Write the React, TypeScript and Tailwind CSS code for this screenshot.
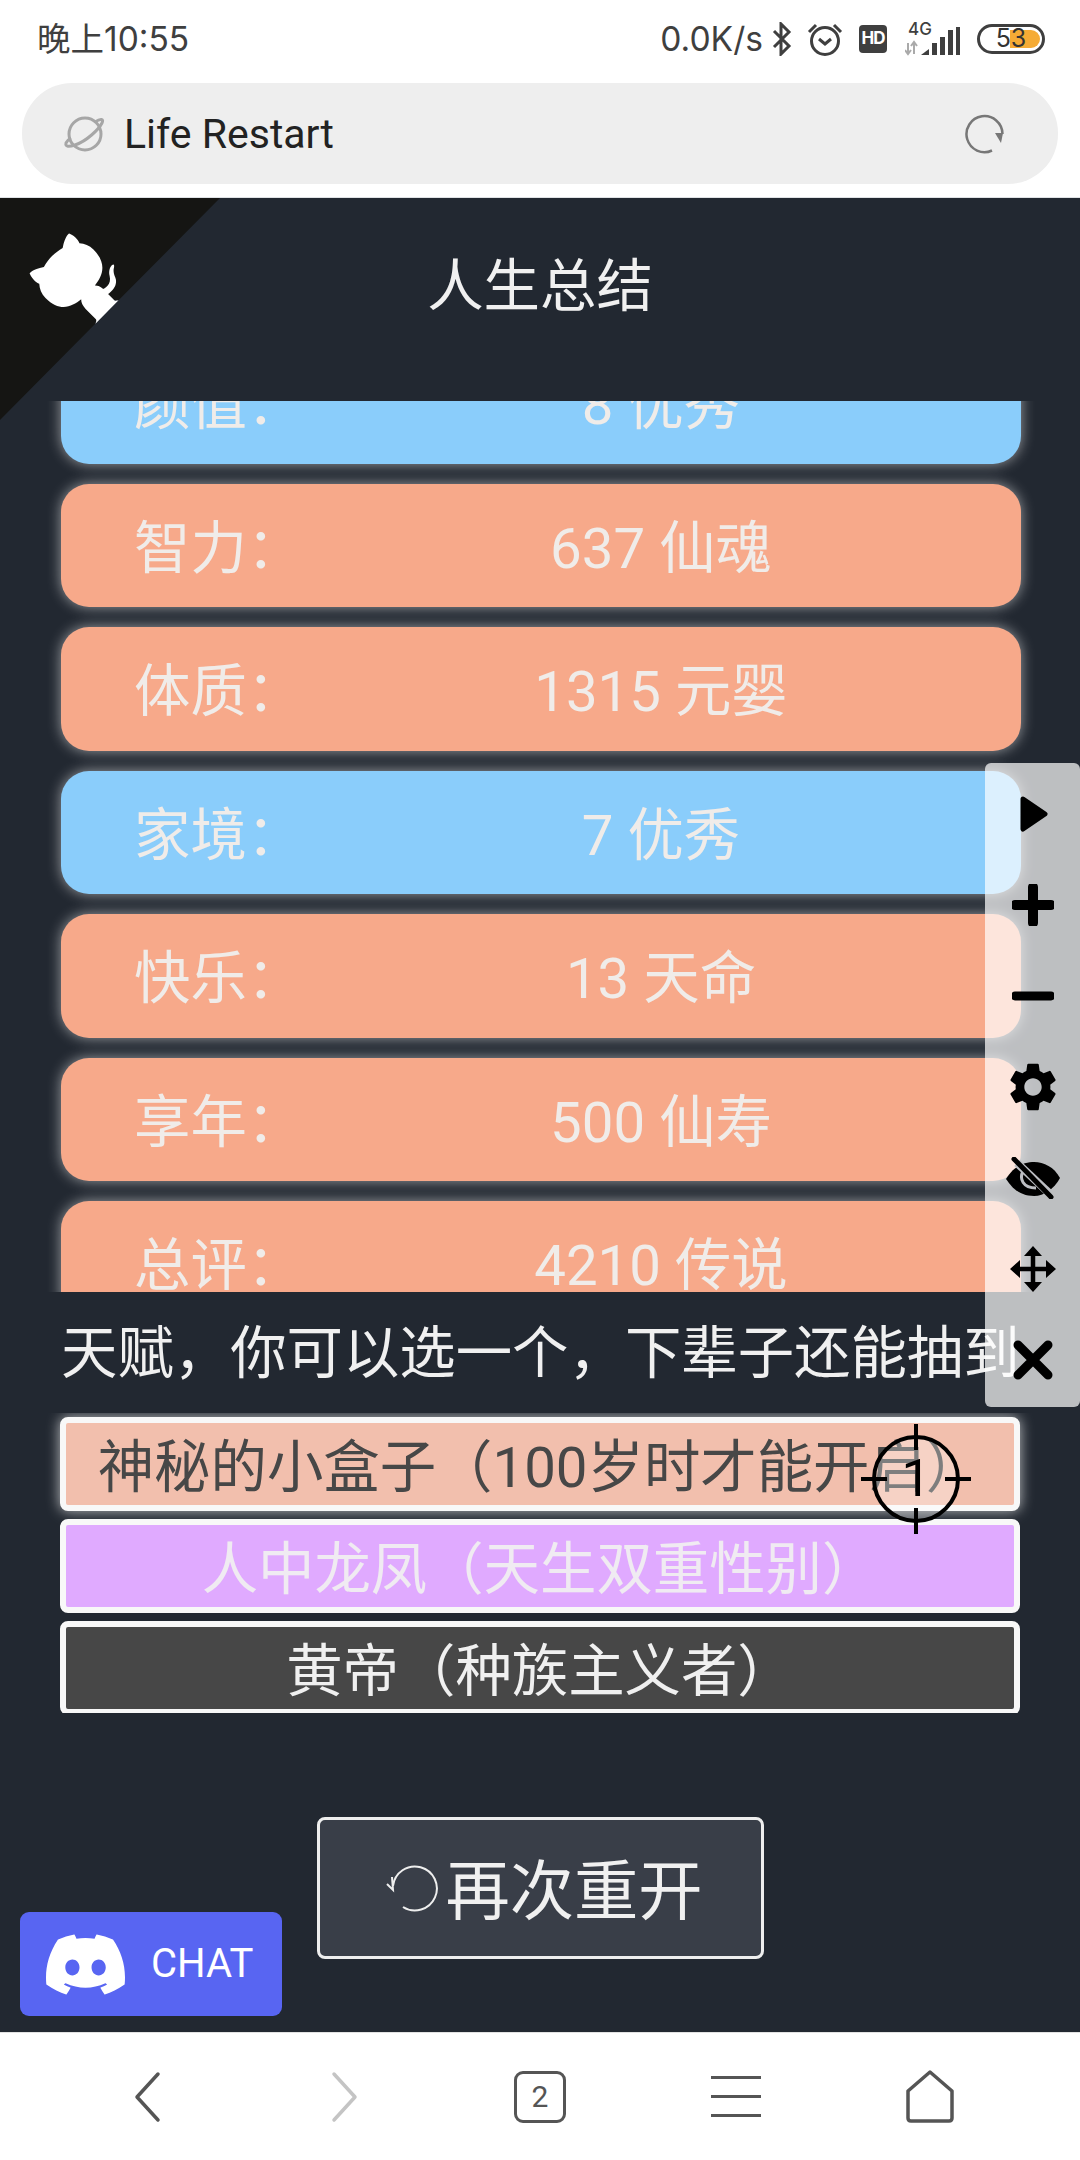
import React from 'react';
import { MdSettings } from 'react-icons/md';
import { SiDiscord } from 'react-icons/si';

const stats = [
  { k: '颜值：', v: '8 优秀', c: 'bg-[#8acdfb]' },
  { k: '智力：', v: '637 仙魂', c: 'bg-[#f7a98a]' },
  { k: '体质：', v: '1315 元婴', c: 'bg-[#f7a98a]' },
  { k: '家境：', v: '7 优秀', c: 'bg-[#8acdfb]' },
  { k: '快乐：', v: '13 天命', c: 'bg-[#f7a98a]' },
  { k: '享年：', v: '500 仙寿', c: 'bg-[#f7a98a]' },
  { k: '总评：', v: '4210 传说', c: 'bg-[#f7a98a]' },
];

function StatusBar() {
  return (
    <div className="h-[83px] shrink-0 flex items-center justify-between pl-[37px] pr-[35px] pb-[6px] text-[#3f3f3f] font-['Inter','Noto_Sans_CJK_SC',sans-serif]">
      <span className="text-[33.5px] leading-[70px]">晚上10:55</span>
      <div className="flex items-center h-[70px]">
        <span className="text-[33.6px] leading-none">0.0K/s</span>
        <svg width="20" height="34" viewBox="0 0 20 34" className="ml-[9px]" fill="none" stroke="#3f3f3f" strokeWidth="3">
          <path d="M2 9 L17 24 L9 32 V2 L17 10 L2 25" />
        </svg>
        <svg width="36" height="34" viewBox="0 0 36 34" className="ml-[15px]" fill="none" stroke="#3f3f3f" strokeWidth="3">
          <circle cx="18" cy="19" r="13.5" />
          <path d="M12 17 L18 22 L24 17" />
          <path d="M2 10 L9 3 M34 10 L27 3" />
        </svg>
        <div className="ml-[16px] w-[28px] h-[28px] rounded-[4px] bg-[#3f3f3f] text-white text-[17px] font-bold flex items-center justify-center leading-none tracking-[-1px]">HD</div>
        <div className="relative ml-[18px] w-[56px] h-[34px]">
          <span className="absolute left-[3px] top-0 text-[17px] leading-[14px] font-medium">4G</span>
          <svg width="56" height="34" viewBox="0 0 56 34" className="absolute left-0 top-0">
            <path d="M3 32 V21 M0 28 L3 32 L6 28 M9 20 V32 M6 24 L9 20 L12 24" stroke="#aaaaaa" strokeWidth="2" fill="none" />
            <path d="M16 33 L24 27 V33 Z" fill="#3f3f3f" />
            <rect x="27" y="21" width="5" height="12" fill="#3f3f3f" />
            <rect x="35" y="15" width="5" height="18" fill="#3f3f3f" />
            <rect x="43" y="8" width="5" height="25" fill="#3f3f3f" />
            <rect x="51" y="5" width="4" height="28" fill="#3f3f3f" />
          </svg>
        </div>
        <div className="relative ml-[16px] w-[68px] h-[30px] rounded-full border-[3px] border-[#3f3f3f]">
          <div className="absolute left-[30px] top-[3px] w-[30px] h-[18px] rounded-r-full bg-[#f5ab35]" />
          <span className="absolute inset-0 flex items-center justify-center text-[25px] leading-none text-[#333333]">53</span>
        </div>
      </div>
    </div>
  );
}

function AddressBar() {
  return (
    <div className="h-[115px] shrink-0 border-b border-[#dfe2e5]">
      <div className="mx-[22px] h-[101px] rounded-[50px] bg-[#eeeeee] flex items-center justify-between pl-[41px] pr-[53px]">
        <div className="flex items-center">
          <svg width="44" height="40" viewBox="0 0 44 40" fill="none" stroke="#a6a6a6" strokeWidth="3">
            <circle cx="22" cy="20" r="16" />
            <path d="M32 8 C38 4 41 5 39 9 C36 15 24 27 12 31 C6 33 2 33 3 29 C4 27 6 25 8 24" />
          </svg>
          <span className="ml-[17px] text-[41px] leading-[50px] text-[#222222] font-['Roboto',sans-serif]">Life Restart</span>
        </div>
        <svg width="40" height="40" viewBox="0 0 40 40" fill="none">
          <path d="M37.5 20 A18 18 0 1 0 27 36.5" stroke="#777777" strokeWidth="2.5" />
          <path d="M30 19 L38 19 L36 29 Z" fill="#777777" />
        </svg>
      </div>
    </div>
  );
}

function StatRow({ k, v, c }: { k: string; v: string; c: string }) {
  return (
    <div className={`${c} h-[123.5px] shrink-0 rounded-[28px] flex items-center pl-[73px] pr-[33px] pt-[7px] text-[56.4px] leading-[76px] text-[#f0ece9] shadow-[0_0_14px_rgba(255,255,255,0.55)]`}>
      <span className="w-[200px] shrink-0">{k}</span>
      <span className="flex-1 text-center">{v}</span>
    </div>
  );
}

function Talent({ text, c, glow }: { text: string; c: string; glow?: boolean }) {
  return (
    <div className={`${c} ${glow ? 'shadow-[0_0_14px_rgba(255,255,255,0.7)]' : ''} h-[94px] shrink-0 rounded-[8px] border-[6px] border-[#f8f8f8] flex items-center justify-center pt-[7px] text-[56.4px] leading-[76px] whitespace-nowrap`}>
      {text}
    </div>
  );
}

function FloatPanel() {
  return (
    <div className="absolute left-[985px] top-[763px] w-[95px] h-[644px] rounded-[6px] bg-white/70 flex flex-col items-center pt-[5px]">
      <div className="h-[91px] w-full flex items-center justify-center blur-[0.5px]">
        <svg width="30" height="38" viewBox="0 0 30 38" className="ml-[2px]"><path d="M4 4 L26 19 L4 34 Z" fill="#000" stroke="#000" strokeWidth="5" strokeLinejoin="round" /></svg>
      </div>
      <div className="h-[91px] w-full flex items-center justify-center blur-[0.5px]">
        <svg width="42" height="42" viewBox="0 0 42 42"><path d="M21 3 V39 M3 21 H39" stroke="#000" strokeWidth="10" strokeLinecap="round" /></svg>
      </div>
      <div className="h-[91px] w-full flex items-center justify-center blur-[0.5px]">
        <svg width="42" height="12" viewBox="0 0 42 12"><path d="M3 6 H39" stroke="#000" strokeWidth="9" strokeLinecap="round" /></svg>
      </div>
      <div className="h-[91px] w-full flex items-center justify-center text-black blur-[0.5px]">
        <MdSettings size={58} />
      </div>
      <div className="h-[91px] w-full flex items-center justify-center blur-[0.5px]">
        <svg width="56" height="42" viewBox="0 0 56 42">
          <path d="M1 22 C10 7 22 5 29 5 C39 5 49 10 55 21 C49 32 39 39 29 39 C17 39 9 34 1 22 Z" fill="#000" />
          <path d="M18 14 C14 22 18 31 31 31" fill="none" stroke="#bcbec3" strokeWidth="3" />
          <path d="M12 6 L44 36" stroke="#bcbec3" strokeWidth="8" />
          <path d="M9 2 L46 40" stroke="#000" strokeWidth="5" strokeLinecap="round" />
        </svg>
      </div>
      <div className="h-[91px] w-full flex items-center justify-center blur-[0.5px]">
        <svg width="46" height="46" viewBox="0 0 46 46">
          <path d="M23 6 V40 M6 23 H40" stroke="#000" strokeWidth="4.5" />
          <path d="M23 0 L32 10 H14 Z M23 46 L14 36 H32 Z M0 23 L10 14 V32 Z M46 23 L36 32 V14 Z" fill="#000" />
        </svg>
      </div>
      <div className="h-[91px] w-full flex items-center justify-center blur-[0.5px]">
        <svg width="40" height="40" viewBox="0 0 40 40"><path d="M5 5 L35 35 M35 5 L5 35" stroke="#000" strokeWidth="9" strokeLinecap="round" /></svg>
      </div>
    </div>
  );
}

function Crosshair() {
  return (
    <div className="absolute left-[858px] top-[1421px] w-[116px] h-[116px] flex items-center justify-center">
      <svg width="116" height="116" viewBox="0 0 116 116" className="absolute inset-0">
        <circle cx="58" cy="58" r="42" fill="rgba(255,255,255,0.3)" stroke="#000" strokeWidth="4" />
        <path d="M58 3 V29 M58 87 V113 M3 58 H29 M87 58 H113" stroke="#000" strokeWidth="4" />
      </svg>
      <span className="relative text-[52px] leading-none text-black font-['Roboto',sans-serif]">1</span>
    </div>
  );
}

function Octocat() {
  return (
    <svg width="220" height="222" viewBox="0 0 250 250" preserveAspectRatio="none" className="absolute left-0 top-[198px]">
      <g transform="translate(250,0) scale(-1,1)">
        <path d="M0,0 L115,115 L130,115 L142,142 L250,250 L250,0 Z" fill="#151513" />
        <path d="M128.3,109.0 C113.8,99.7 119.0,89.6 119.0,89.6 C122.0,82.7 120.5,78.6 120.5,78.6 C119.2,72.0 123.4,76.3 123.4,76.3 C127.3,80.9 125.5,87.3 125.5,87.3 C122.9,97.6 130.6,101.9 134.4,103.2" fill="#fff" />
        <path d="M115.0,115.0 C114.9,115.1 118.7,116.5 119.8,115.4 L133.7,101.6 C136.9,99.2 139.9,98.4 142.2,98.6 C133.8,88.0 127.5,74.4 143.8,58.0 C148.5,53.4 154.0,51.2 159.7,51.0 C160.3,49.4 163.2,43.6 171.4,40.1 C171.4,40.1 176.1,42.5 178.8,56.2 C183.1,58.6 187.2,61.8 190.9,65.4 C194.5,69.0 197.7,73.2 200.1,77.6 C213.8,80.2 216.3,84.9 216.3,84.9 C212.7,93.1 206.9,96.0 205.4,96.6 C205.1,102.4 203.0,107.8 198.3,112.5 C181.9,128.9 168.3,122.5 157.7,114.1 C157.9,116.9 156.7,120.9 152.7,124.9 L141.0,136.5 C139.8,137.7 141.6,141.9 141.8,141.8 Z" fill="#fff" />
      </g>
    </svg>
  );
}

function NavBar() {
  return (
    <div className="h-[128px] shrink-0 bg-white border-t border-[#e2e2e2] grid grid-cols-5 px-[50px] items-center">
      <div className="flex justify-center">
        <svg width="30" height="52" viewBox="0 0 30 52" fill="none" stroke="#555555" strokeWidth="3.5" strokeLinecap="round" strokeLinejoin="round"><path d="M25 3 L4 26 L25 49" /></svg>
      </div>
      <div className="flex justify-center">
        <svg width="30" height="52" viewBox="0 0 30 52" fill="none" stroke="#c4c4c4" strokeWidth="3.5" strokeLinecap="round" strokeLinejoin="round"><path d="M5 3 L26 26 L5 49" /></svg>
      </div>
      <div className="flex justify-center">
        <div className="w-[52px] h-[52px] rounded-[9px] border-[3px] border-[#555555] flex items-center justify-center text-[30px] leading-none text-[#555555] font-['Roboto',sans-serif]">2</div>
      </div>
      <div className="flex justify-center">
        <div className="w-[50px] flex flex-col gap-[16px]">
          <div className="h-[3px] bg-[#555555]" />
          <div className="h-[3px] bg-[#555555]" />
          <div className="h-[3px] bg-[#555555]" />
        </div>
      </div>
      <div className="flex justify-center">
        <svg width="50" height="54" viewBox="0 0 50 54" fill="none" stroke="#555555" strokeWidth="3.5" strokeLinejoin="round" className="-ml-[4px]"><path d="M25 2 L3 21 V48 Q3 51 6 51 H44 Q47 51 47 48 V21 Z" /></svg>
      </div>
    </div>
  );
}

export default function App() {
  return (
    <div className="relative w-[1080px] h-[2160px] overflow-hidden bg-white flex flex-col font-['Roboto','Noto_Sans_CJK_SC',sans-serif]">
      <StatusBar />
      <AddressBar />
      <main className="flex-1 min-h-0 bg-[#222831] flex flex-col text-[#f0f0f0]">
        <header className="h-[203px] shrink-0 flex items-center justify-center pb-[26px]">
          <h1 className="text-[56.4px] leading-[76px]">人生总结</h1>
        </header>
        <section className="h-[891px] shrink-0 overflow-hidden pl-[61px] pr-[59px]">
          <div className="flex flex-col gap-[20px] -mt-[61px]">
            {stats.map((s) => (
              <StatRow key={s.k} k={s.k} v={s.v} c={s.c} />
            ))}
          </div>
        </section>
        <div className="h-[121px] shrink-0 pl-[61px] pt-[24px] text-[56.4px] leading-[76px] whitespace-nowrap">天赋，你可以选一个，下辈子还能抽到</div>
        <section className="h-[300px] shrink-0 overflow-hidden px-[60px] pt-[4px] flex flex-col gap-[8px]">
          <Talent text="神秘的小盒子（100岁时才能开启）" c="bg-[#f2bfad] text-[#474747]" glow />
          <Talent text="人中龙凤（天生双重性别）" c="bg-[#e0aaff] text-[#f0ebf2]" />
          <Talent text="黄帝（种族主义者）" c="bg-[#474747] text-[#f0f0f0]" />
        </section>
        <div className="pt-[104px] flex justify-center">
          <button className="w-[447px] h-[142px] rounded-[8px] border-[3px] border-[#eeeeee] bg-[#393e48] flex items-center justify-center pt-[8px] text-[64.3px] leading-[80px] text-[#f0f0f0]">
            <svg width="56" height="56" viewBox="0 0 56 56" fill="none" stroke="#eeeeee" strokeWidth="2" className="mr-[5px] ml-[7px] mb-[8px]">
              <path d="M9 26 A22 22 0 1 1 19 47" />
              <path d="M3 24 L9 30 L8 17" />
            </svg>
            再次重开
          </button>
        </div>
      </main>
      <NavBar />
      <Octocat />
      <FloatPanel />
      <Crosshair />
      <div className="absolute left-[20px] top-[1912px] w-[262px] h-[104px] rounded-[9px] bg-[#5865f2] flex items-center pl-[26px] text-white">
        <SiDiscord size={79} />
        <span className="ml-[26px] text-[40px] leading-none font-['Roboto',sans-serif]">CHAT</span>
      </div>
    </div>
  );
}
